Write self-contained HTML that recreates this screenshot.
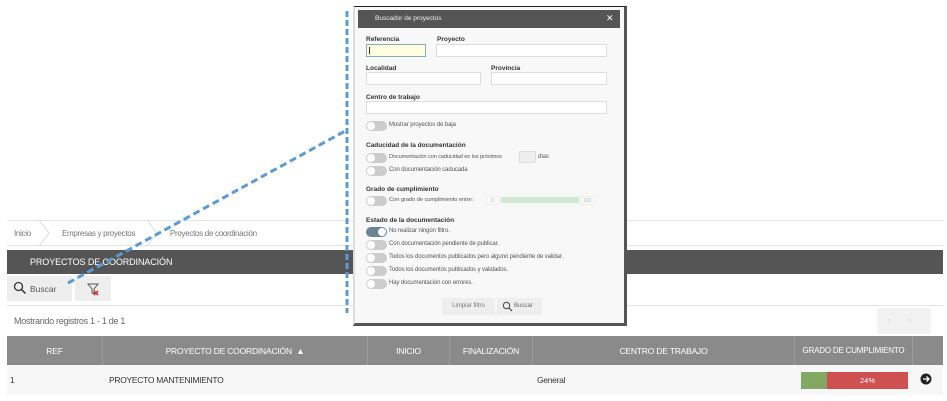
<!DOCTYPE html><html><head><meta charset="utf-8"><style>
*{box-sizing:border-box;margin:0;padding:0}
body{width:947px;height:401px;overflow:hidden;background:#fff;font-family:"Liberation Sans",sans-serif;position:relative;color:#444}
.a{position:absolute}
.t{font-size:8px;color:#777;position:absolute;letter-spacing:-0.3px;white-space:nowrap}
.th{position:absolute;top:336px;height:29px;background:#8a8a8a;color:#fff;font-size:8.5px;display:flex;align-items:center;justify-content:center;border-right:1px solid #9c9c9c;white-space:nowrap;letter-spacing:-0.2px}
.lbl{position:absolute;font-size:6.5px;font-weight:bold;color:#333;white-space:nowrap}
.inp{position:absolute;height:13px;background:#fff;border:1px solid #ddd}
.tg{position:absolute;width:21px;height:10px;border-radius:5px;background:#ccc}
.tg:after{content:"";position:absolute;left:1px;top:1px;width:8px;height:8px;border-radius:50%;background:#fff}
.tg.on{background:#6b8494}.tg.on:after{left:12px}
.tx{position:absolute;font-size:6px;color:#555;white-space:nowrap;letter-spacing:-0.1px}
</style></head><body>
<div class="a" style="left:7px;top:220px;width:936px;height:1px;background:#e4e4e4"></div>
<div class="a" style="left:7px;top:245px;width:936px;height:1px;background:#e4e4e4"></div>
<div class="t" style="left:14px;top:229px">Inicio</div>
<div class="t" style="left:62px;top:229px">Empresas y proyectos</div>
<div class="t" style="left:170px;top:229px">Proyectos de coordinación</div>
<svg class="a" style="left:38px;top:220px" width="12" height="26"><path d="M1 0L11 13L1 26" fill="none" stroke="#ddd"/></svg>
<svg class="a" style="left:146px;top:220px" width="12" height="26"><path d="M1 0L11 13L1 26" fill="none" stroke="#ddd"/></svg>
<div class="a" style="left:7px;top:250px;width:936px;height:24px;background:#555;color:#fff;font-size:9px;padding:7px 0 0 23px;letter-spacing:-0.1px">PROYECTOS DE COORDINACIÓN</div>
<div class="a" style="left:7px;top:276px;width:65px;height:25px;background:#eee;font-size:8.5px;color:#555;padding:8px 0 0 23px">Buscar</div>
<svg class="a" style="left:13px;top:281px" width="14" height="14"><circle cx="5.5" cy="5.5" r="4" fill="none" stroke="#333" stroke-width="1.3"/><path d="M8.5 8.5L12.5 12.5" stroke="#333" stroke-width="1.5"/></svg>
<div class="a" style="left:75px;top:276px;width:36px;height:25px;background:#eee"></div>
<svg class="a" style="left:87px;top:283px" width="14" height="14"><path d="M1 1H11L7 6V11L5 10V6Z" fill="none" stroke="#555" stroke-width="1"/><path d="M7 8L11 12M11 8L7 12" stroke="#d33" stroke-width="1.6"/></svg>
<div class="a" style="left:7px;top:305px;width:936px;height:1px;background:#e4e4e4"></div>
<div class="t" style="left:14px;top:316px;font-size:9px;color:#666">Mostrando registros 1 - 1 de 1</div>
<div class="a" style="left:877px;top:308px;width:54px;height:26px;background:#f2f2f2;border-radius:2px;color:#ddd;font-size:12px;padding:5px 0 0 10px">‹&nbsp;&nbsp;&nbsp;&nbsp;&nbsp;›</div>
<div class="th" style="left:7px;width:96px">REF</div>
<div class="th" style="left:103px;width:265px">PROYECTO DE COORDINACIÓN&nbsp; ▲</div>
<div class="th" style="left:368px;width:82px">INICIO</div>
<div class="th" style="left:450px;width:83px">FINALIZACIÓN</div>
<div class="th" style="left:533px;width:262px">CENTRO DE TRABAJO</div>
<div class="th" style="left:795px;width:118px;font-size:8px">GRADO DE CUMPLIMIENTO</div>
<div class="th" style="left:913px;width:30px;border:0"></div>
<div class="a" style="left:7px;top:365px;width:936px;height:30px;background:#f7f7f7"></div>
<div class="t" style="left:10px;top:375px;color:#333;font-size:8.5px">1</div>
<div class="t" style="left:109px;top:375px;color:#333;font-size:8.5px">PROYECTO MANTENIMIENTO</div>
<div class="t" style="left:537px;top:375px;color:#333;font-size:8.5px">General</div>
<div class="a" style="left:801px;top:372px;width:26px;height:17px;background:#82a862"></div>
<div class="a" style="left:827px;top:372px;width:81px;height:17px;background:#cf5050;color:#fff;font-size:7.5px;text-align:center;line-height:17px">24%</div>
<svg class="a" style="left:920px;top:373px" width="12" height="12"><circle cx="6" cy="6" r="5.5" fill="#222"/><path d="M3 6H9M6.5 3.5L9 6L6.5 8.5" fill="none" stroke="#fff" stroke-width="1.3"/></svg>
<div class="a" style="left:353px;top:6px;width:274px;height:320px;background:#f8f8f8;border:3px solid #555;border-left:2px solid #ddd;border-top:1px solid #222"></div>
<div class="a" style="left:358px;top:10px;width:262px;height:18px;background:#555;color:#eee;font-size:6.5px;padding:5px 0 0 17px">Buscador de proyectos</div>
<div class="a" style="left:606px;top:13px;color:#fff;font-size:9px">✕</div>
<div class="lbl" style="left:366px;top:36px">Referencia</div><div class="lbl" style="left:437px;top:36px">Proyecto</div>
<div class="inp" style="left:366px;top:44px;width:60px;background:#ffffe0;border-color:#8ab"></div>
<div class="a" style="left:369px;top:47px;width:1px;height:7px;background:#333"></div>
<div class="inp" style="left:436px;top:44px;width:171px"></div>
<div class="lbl" style="left:366px;top:65px">Localidad</div><div class="lbl" style="left:491px;top:65px">Provincia</div>
<div class="inp" style="left:366px;top:72px;width:115px"></div><div class="inp" style="left:491px;top:72px;width:116px"></div>
<div class="lbl" style="left:366px;top:94px">Centro de trabajo</div>
<div class="inp" style="left:366px;top:101px;width:241px"></div>
<div class="tg" style="left:366px;top:121px"></div><div class="tx" style="left:389px;top:122px">Mostrar proyectos de baja</div>
<div class="lbl" style="left:366px;top:142px">Caducidad de la documentación</div>
<div class="tg" style="left:366px;top:153px"></div><div class="tx" style="left:389px;top:154px;font-size:5.6px">Documentación con caducidad en los próximos</div>
<div class="a" style="left:519px;top:151px;width:17px;height:12px;background:#eee;border:1px solid #ddd"></div><div class="tx" style="left:538px;top:154px">días</div>
<div class="tg" style="left:366px;top:166px"></div><div class="tx" style="left:389px;top:167px">Con documentación caducada</div>
<div class="lbl" style="left:366px;top:186px">Grado de cumplimiento</div>
<div class="tg" style="left:366px;top:196px"></div><div class="tx" style="left:389px;top:197px;font-size:5.8px">Con grado de cumplimiento entre:</div>
<div class="a" style="left:486px;top:196px;width:14px;height:9px;border:1px solid #eee;font-size:5px;color:#bbb;padding:1px 0 0 4px">0</div>
<div class="a" style="left:501px;top:197px;width:78px;height:6px;background:#cfe8cf"></div>
<div class="a" style="left:579px;top:196px;width:16px;height:9px;border:1px solid #eee;font-size:5px;color:#bbb;padding:1px 0 0 3px">100</div>
<div class="lbl" style="left:366px;top:217px">Estado de la documentación</div>
<div class="tg on" style="left:366px;top:227px"></div><div class="tx" style="left:389px;top:228px">No realizar ningún filtro.</div>
<div class="tg" style="left:366px;top:240px"></div><div class="tx" style="left:389px;top:241px">Con documentación pendiente de publicar.</div>
<div class="tg" style="left:366px;top:253px"></div><div class="tx" style="left:389px;top:254px">Todos los documentos publicados pero alguno pendiente de validar.</div>
<div class="tg" style="left:366px;top:266px"></div><div class="tx" style="left:389px;top:267px">Todos los documentos publicados y validados.</div>
<div class="tg" style="left:366px;top:279px"></div><div class="tx" style="left:389px;top:280px">Hay documentación con errores.</div>
<div class="a" style="left:442px;top:298px;width:53px;height:17px;background:#eee;font-size:6px;color:#777;text-align:center;line-height:17px">Limpiar filtro</div>
<div class="a" style="left:497px;top:298px;width:45px;height:17px;background:#eee;font-size:6px;color:#666;line-height:17px;padding-left:17px">Buscar</div>
<svg class="a" style="left:502px;top:301px" width="11" height="11"><circle cx="4.5" cy="4.5" r="3.2" fill="none" stroke="#444" stroke-width="1"/><path d="M7 7L10 10" stroke="#444" stroke-width="1.2"/></svg>
<svg class="a" style="left:0;top:0" width="947" height="401"><path d="M347 11V313" stroke="#5b9bd5" stroke-width="3" stroke-dasharray="6 3"/><path d="M68 283L347 130" stroke="#5b9bd5" stroke-width="3" stroke-dasharray="7 4"/></svg>
</body></html>
